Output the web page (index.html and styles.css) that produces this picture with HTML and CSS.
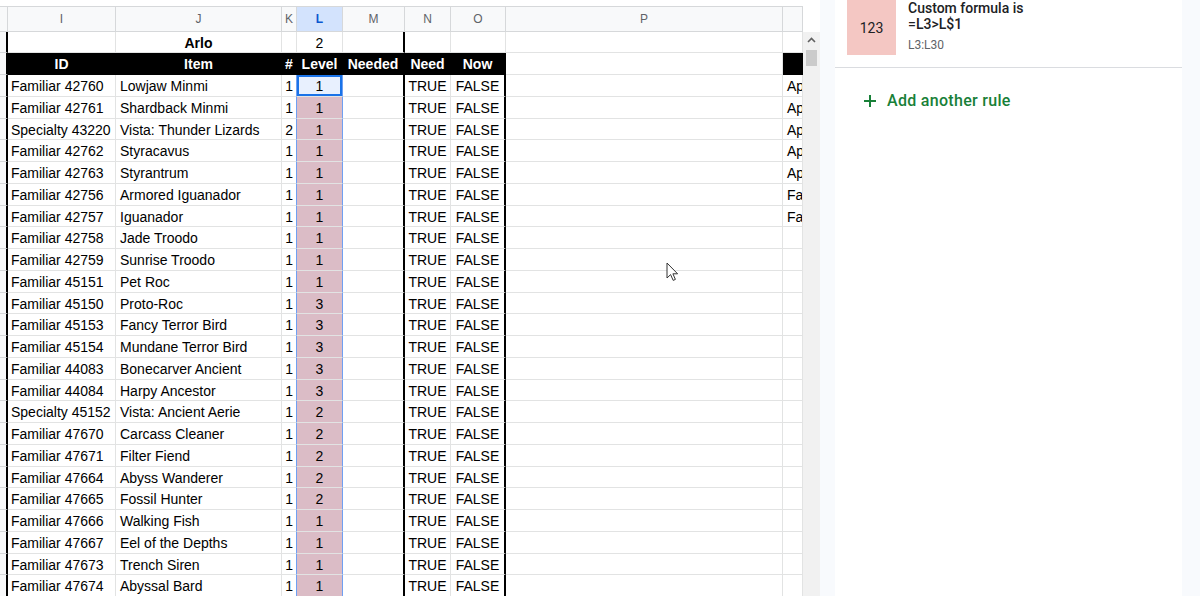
FILE: index.html
```html
<!DOCTYPE html>
<html lang="en">
<head>
  <meta charset="UTF-8">
  <meta name="viewport" content="width=device-width, initial-scale=1">
  <title>Arlo - Sheet</title>
  <link rel="stylesheet" href="styles.css">
</head>
<body>
  <div class="sheet">
    <div class="grid" id="grid">
      <!-- Letras de columna -->
      <div class="row col-head">
        <div class="cell rh"></div>
        <div class="cell">I</div>
        <div class="cell">J</div>
        <div class="cell">K</div>
        <div class="cell sel">L</div>
        <div class="cell">M</div>
        <div class="cell">N</div>
        <div class="cell">O</div>
        <div class="cell">P</div>
        <div class="cell"></div>
      </div>
      <!-- Fila 1 -->
      <div class="row r1">
        <div class="cell rh edge"></div>
        <div class="cell"></div>
        <div class="cell center bold">Arlo</div>
        <div class="cell"></div>
        <div class="cell center">2</div>
        <div class="cell div"></div>
        <div class="cell"></div>
        <div class="cell"></div>
        <div class="cell"></div>
        <div class="cell"></div>
      </div>
      <!-- Fila 2: cabecera -->
      <div class="row r2">
        <div class="cell rh edge"></div>
        <div class="cell b">ID</div>
        <div class="cell b">Item</div>
        <div class="cell b k">#</div>
        <div class="cell b">Level</div>
        <div class="cell b div">Needed</div>
        <div class="cell b">Need</div>
        <div class="cell b end">Now</div>
        <div class="cell"></div>
        <div class="cell b"></div>
      </div>
      <!-- Filas de datos dinámicas -->
    </div>
    <div class="scrollbar">
      <div class="arrow">
        <svg width="9" height="6" viewBox="0 0 9 6"><polyline points="1,5 4.5,1.5 8,5" fill="none" stroke="#606060" stroke-width="1.6"/></svg>
      </div>
      <div class="thumb"></div>
    </div>
    <svg class="cursor" width="13" height="20" viewBox="0 0 13 20">
      <path d="M1,1 L1,16 L4.6,12.6 L7.2,18.4 L9.4,17.4 L6.9,11.8 L11.6,11.8 Z" fill="#fff" stroke="#333" stroke-width="1" stroke-linejoin="round"/>
    </svg>
  </div>

  <div class="panel">
    <div class="card">
      <div class="rule">
        <div class="swatch">123</div>
        <div class="rule-text">
          <div class="rule-title">Custom formula is<br>=L3&gt;L$1</div>
          <div class="rule-range">L3:L30</div>
        </div>
      </div>
      <div class="add">
        <svg width="14" height="14" viewBox="0 0 14 14"><path d="M7 1v12M1 7h12" stroke="#188038" stroke-width="2"/></svg>
        <span>Add another rule</span>
      </div>
    </div>
  </div>

  <script>
    const items = [
      ['Familiar 42760', 'Lowjaw Minmi', 1, 1, 'Approved'],
      ['Familiar 42761', 'Shardback Minmi', 1, 1, 'Approved'],
      ['Specialty 43220', 'Vista: Thunder Lizards', 2, 1, 'Approved'],
      ['Familiar 42762', 'Styracavus', 1, 1, 'Approved'],
      ['Familiar 42763', 'Styrantrum', 1, 1, 'Approved'],
      ['Familiar 42756', 'Armored Iguanador', 1, 1, 'Failed'],
      ['Familiar 42757', 'Iguanador', 1, 1, 'Failed'],
      ['Familiar 42758', 'Jade Troodo', 1, 1, ''],
      ['Familiar 42759', 'Sunrise Troodo', 1, 1, ''],
      ['Familiar 45151', 'Pet Roc', 1, 1, ''],
      ['Familiar 45150', 'Proto-Roc', 1, 3, ''],
      ['Familiar 45153', 'Fancy Terror Bird', 1, 3, ''],
      ['Familiar 45154', 'Mundane Terror Bird', 1, 3, ''],
      ['Familiar 44083', 'Bonecarver Ancient', 1, 3, ''],
      ['Familiar 44084', 'Harpy Ancestor', 1, 3, ''],
      ['Specialty 45152', 'Vista: Ancient Aerie', 1, 2, ''],
      ['Familiar 47670', 'Carcass Cleaner', 1, 2, ''],
      ['Familiar 47671', 'Filter Fiend', 1, 2, ''],
      ['Familiar 47664', 'Abyss Wanderer', 1, 2, ''],
      ['Familiar 47665', 'Fossil Hunter', 1, 2, ''],
      ['Familiar 47666', 'Walking Fish', 1, 1, ''],
      ['Familiar 47667', 'Eel of the Depths', 1, 1, ''],
      ['Familiar 47673', 'Trench Siren', 1, 1, ''],
      ['Familiar 47674', 'Abyssal Bard', 1, 1, '']
    ];

    const grid = document.getElementById('grid');
    items.forEach((item, i) => {
      const row = `
        <div class="row">
          <div class="cell rh edge"></div>
          <div class="cell">${item[0]}</div>
          <div class="cell item">${item[1]}</div>
          <div class="cell num k">${item[2]}</div>
          <div class="cell lv${i === 0 ? ' active' : ''}">${item[3]}</div>
          <div class="cell div"></div>
          <div class="cell center">TRUE</div>
          <div class="cell center end">FALSE</div>
          <div class="cell"></div>
          <div class="cell q">${item[4]}</div>
        </div>
      `;
      grid.innerHTML += row;
    });
  </script>
</body>
</html>
```

FILE: styles.css
```css
/* Base */
body {
  margin: 0;
  display: flex;
  height: 100vh;
  overflow: hidden;
  background-color: #fff;
  font-family: "Liberation Sans", Arial, sans-serif;
}

/* Hoja */
.sheet {
  position: relative;
  display: flex;
  width: 820px;
  padding-top: 6px;
  box-sizing: border-box;
  flex-shrink: 0;
}
.grid {
  width: 803px;
}
.row {
  display: grid;
  grid-template-columns: 8px 108px 166px 15px 46px 62px 46px 55px 277px 20px;
  height: 21.75px;
}
.cell {
  box-sizing: border-box;
  border-right: 1px solid #e2e3e3;
  border-bottom: 1px solid #e2e3e3;
  padding: 0 3px;
  font-size: 14px;
  line-height: 22px;
  color: #000;
  white-space: nowrap;
  overflow: hidden;
}
.center {
  text-align: center;
}
.bold {
  font-weight: bold;
}
.num {
  text-align: right;
}
.item {
  padding-left: 4px;
}
.q {
  padding-left: 4px;
}

/* Letras de columna */
.col-head {
  height: 26px;
}
.col-head .cell {
  background-color: #f8f9fa;
  border-top: 1px solid #e1e3e1;
  border-color: #d6d8da;
  font-size: 12px;
  line-height: 24px;
  color: #5f6368;
  text-align: center;
}
.col-head .sel {
  background-color: #d3e3fd;
  color: #0b57d0;
  font-weight: bold;
}
.r1 {
  height: 21px;
}
.r2 {
  height: 22px;
}

/* Cabecera de filas (recortada) */
.rh {
  padding: 0;
  background-color: #f8f9fa;
  border-bottom-color: #d6d8da;
}
.edge {
  border-right: 2px solid #000;
}
.div {
  border-right: 2px solid #000;
}
.end {
  border-right: 2px solid #000;
}

/* Fila negra */
.r2 .b {
  background-color: #000;
  border-color: #000;
  color: #fff;
  font-weight: bold;
  text-align: center;
  line-height: 23px;
}
.r2 .k {
  padding: 0;
}

/* Columna Level con formato condicional */
.k {
  border-right-color: #6fa0f2;
}
.lv {
  text-align: center;
  background-color: #dbbcc6;
  border-right-color: #6fa0f2;
}
.lv.active {
  background-color: #e8f0fe;
  box-shadow: inset 0 0 0 2px #1a73e8;
}

/* Scrollbar */
.scrollbar {
  width: 17px;
  margin-top: 26px;
  background-color: #f1f1f1;
}
.arrow {
  height: 16px;
  display: flex;
  justify-content: center;
  align-items: center;
}
.thumb {
  margin: 2px 3px 0 3px;
  height: 16px;
  background-color: #cbcbcb;
}
.cursor {
  position: absolute;
  left: 666px;
  top: 262px;
}

/* Panel lateral */
.panel {
  flex: 1;
  background-color: #f8fafd;
  padding: 0 18px 0 15px;
}
.card {
  background-color: #fff;
  height: 100%;
  font-family: Roboto, "Liberation Sans", sans-serif;
}
.rule {
  display: flex;
  gap: 12px;
  height: 68px;
  padding: 0 12px;
  box-sizing: border-box;
  border-bottom: 1px solid #dadce0;
}
.swatch {
  width: 49px;
  height: 55px;
  background-color: #f4c7c3;
  color: #202124;
  font-size: 14px;
  display: flex;
  justify-content: center;
  align-items: center;
}
.rule-title {
  font-size: 14px;
  font-weight: 500;
  line-height: 16px;
  color: #202124;
}
.rule-range {
  margin-top: 5px;
  font-size: 12px;
  line-height: 16px;
  color: #5f6368;
}
.add {
  display: flex;
  align-items: center;
  gap: 10px;
  padding: 23px 0 0 28px;
  color: #188038;
  font-size: 16px;
  font-weight: 500;
  letter-spacing: 0.3px;
}
```
